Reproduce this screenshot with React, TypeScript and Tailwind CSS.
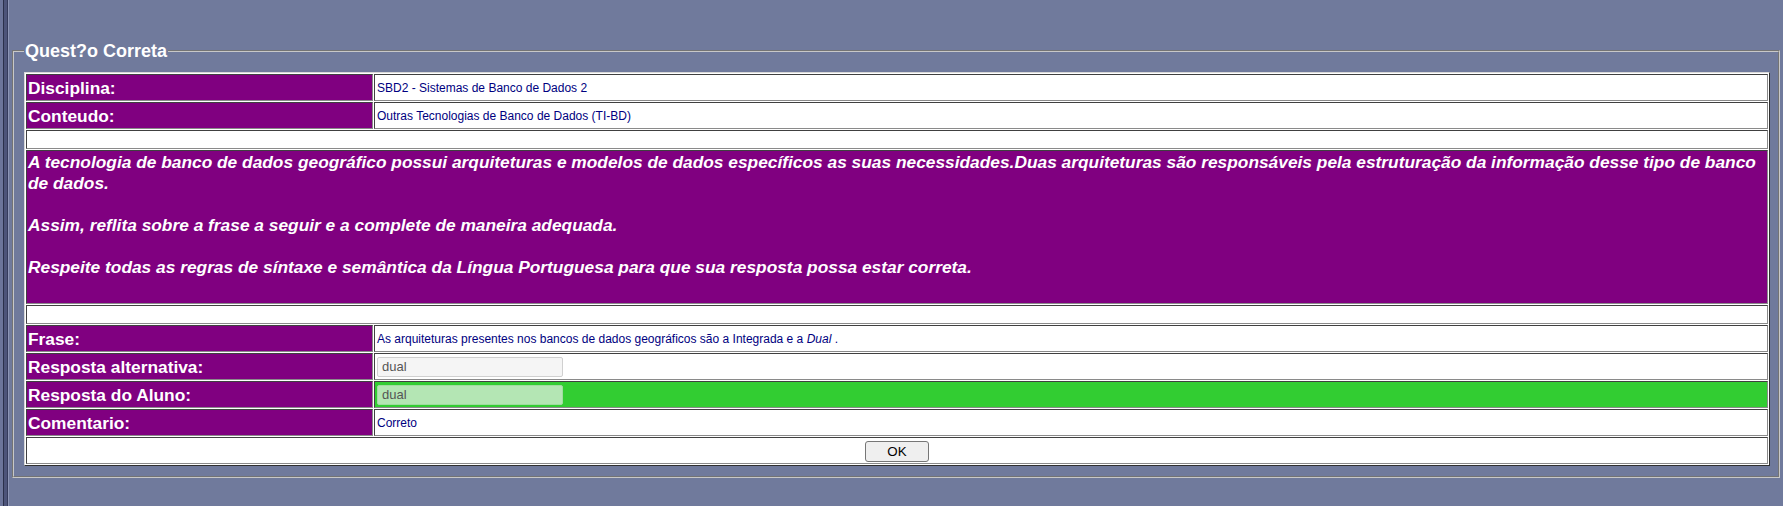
import React from "react";

const cellBorder =
  "border border-t-[#404040] border-l-[#404040] border-b-[#8a8a8a] border-r-[#8a8a8a]";
const labelTd = `${cellBorder} w-[347px] h-[27px] bg-[#800080] px-[1px] text-white font-bold text-[17.33px] leading-[20px] align-middle whitespace-nowrap`;
const valueTd = `${cellBorder} h-[27px] bg-white px-[2px] text-[12px] leading-[14px] text-[#000080] align-middle`;

export default function App() {
  return (
    <div className="flex min-h-[506px] w-[1783px] bg-[#707a9c] font-['Liberation_Sans',Arial,sans-serif]">
      <div className="flex shrink-0">
        <div className="w-[3px] bg-[#6c759a]" />
        <div className="w-[1px] bg-[#2b304a]" />
        <div className="w-[3px] bg-[#4d5479]" />
        <div className="w-[1px] bg-[#353b5c]" />
        <div className="w-[1px] bg-[#8e96b6]" />
      </div>
      <div className="flex-1 px-[3px] pt-[41px]">
        <fieldset className="border-2 [border-style:groove] border-[#c8c8c8] pl-[10px] pr-[8px] pt-[11px] pb-[10px]">
          <legend className="px-[1px] text-[18px] leading-[20px] font-bold text-white">
            Quest?o Correta
          </legend>
          <table className="w-full border-separate border-spacing-[1px] bg-white border border-t-[#d8d8d8] border-l-[#d8d8d8] border-b-[#303030] border-r-[#303030]">
            <tbody>
              <tr>
                <td className={labelTd}>Disciplina:</td>
                <td className={valueTd}>SBD2 - Sistemas de Banco de Dados 2</td>
              </tr>
              <tr>
                <td className={labelTd}>Conteudo:</td>
                <td className={valueTd}>Outras Tecnologias de Banco de Dados (TI-BD)</td>
              </tr>
              <tr>
                <td colSpan={2} className={`${cellBorder} h-[19px] bg-white`} />
              </tr>
              <tr>
                <td
                  colSpan={2}
                  className={`${cellBorder} h-[154px] align-top bg-[#800080] p-[1px] text-white font-bold italic text-[17.33px] leading-[21px]`}
                >
                  A tecnologia de banco de dados geográfico possui arquiteturas e modelos de dados
                  específicos as suas necessidades.Duas arquiteturas são responsáveis pela
                  estruturação da informação desse tipo de banco de dados.
                  <br />
                  <br />
                  Assim, reflita sobre a frase a seguir e a complete de maneira adequada.
                  <br />
                  <br />
                  Respeite todas as regras de síntaxe e semântica da Língua Portuguesa para que sua
                  resposta possa estar correta.
                </td>
              </tr>
              <tr>
                <td colSpan={2} className={`${cellBorder} h-[19px] bg-white`} />
              </tr>
              <tr>
                <td className={labelTd}>Frase:</td>
                <td className={valueTd}>
                  As arquiteturas presentes nos bancos de dados geográficos são a Integrada e a{" "}
                  <i>Dual</i> .
                </td>
              </tr>
              <tr>
                <td className={labelTd}>Resposta alternativa:</td>
                <td className={valueTd}>
                  <input
                    readOnly
                    value="dual"
                    className="block w-[186px] h-[20px] bg-[#f5f5f5] border border-[#d0d0d0] rounded-[2px] px-[4px] text-[13px] text-[#555] outline-none font-['Liberation_Sans',Arial,sans-serif]"
                  />
                </td>
              </tr>
              <tr>
                <td className={labelTd}>Resposta do Aluno:</td>
                <td className={`${cellBorder} h-[27px] bg-[#32cd32] px-[2px] align-middle`}>
                  <input
                    readOnly
                    value="dual"
                    className="block w-[186px] h-[20px] bg-[#b4e6b4] border border-[#a0dca0] rounded-[2px] px-[4px] text-[13px] text-[#555] outline-none font-['Liberation_Sans',Arial,sans-serif]"
                  />
                </td>
              </tr>
              <tr>
                <td className={labelTd}>Comentario:</td>
                <td className={valueTd}>Correto</td>
              </tr>
              <tr>
                <td colSpan={2} className={`${cellBorder} h-[27px] bg-white text-center align-middle`}>
                  <button className="inline-block align-middle w-[64px] h-[21px] bg-[#efefef] border border-[#767676] rounded-[3px] text-[13.33px] leading-[15px] text-black font-['Liberation_Sans',Arial,sans-serif]">
                    OK
                  </button>
                </td>
              </tr>
            </tbody>
          </table>
        </fieldset>
      </div>
    </div>
  );
}
